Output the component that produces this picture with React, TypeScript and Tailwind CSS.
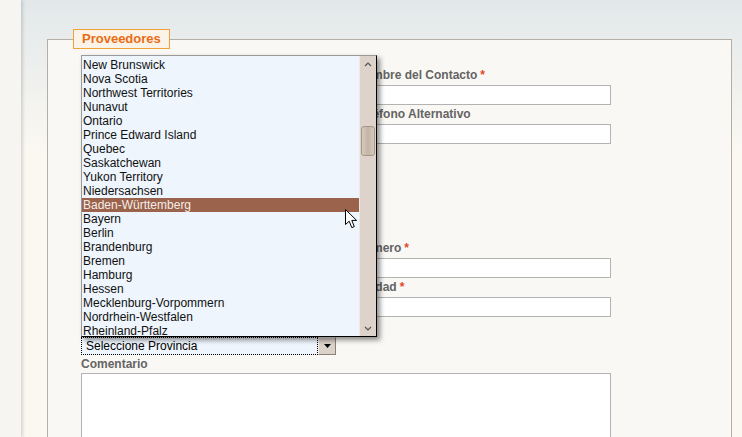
import React from 'react'

const provinces = [
  'New Brunswick',
  'Nova Scotia',
  'Northwest Territories',
  'Nunavut',
  'Ontario',
  'Prince Edward Island',
  'Quebec',
  'Saskatchewan',
  'Yukon Territory',
  'Niedersachsen',
  'Baden-Württemberg',
  'Bayern',
  'Berlin',
  'Brandenburg',
  'Bremen',
  'Hamburg',
  'Hessen',
  'Mecklenburg-Vorpommern',
  'Nordrhein-Westfalen',
  'Rheinland-Pfalz',
]

const Label = ({ text, required }: { text: string; required?: boolean }) => (
  <div className="h-[19px] leading-[19px] text-[12px] font-bold text-[#646464] whitespace-nowrap">
    {text}
    {required && <span className="ml-[3px] text-[#e5472b]">*</span>}
  </div>
)

const Field = ({ label, required }: { label: string; required?: boolean }) => (
  <div className="flex flex-col">
    <Label text={label} required={required} />
    <input type="text" className="h-[20px] w-full border border-[#b3b3b3] bg-white outline-none" />
  </div>
)

const Chevron = ({ down }: { down?: boolean }) => (
  <svg width="8" height="5" viewBox="0 0 8 5" className="text-[#555]">
    <polyline
      points={down ? '1,1 4,4 7,1' : '1,4 4,1 7,4'}
      fill="none"
      stroke="currentColor"
      strokeWidth="1.2"
    />
  </svg>
)

export default function App() {
  const selected = 'Baden-Württemberg'

  return (
    <div className="relative flex w-[742px] h-[437px] overflow-hidden font-['Liberation_Sans',Arial,sans-serif]">
      {/* left strip */}
      <div className="relative z-10 w-[21px] shrink-0 bg-[#f7f5f1] shadow-[2px_0_3px_rgba(0,0,0,0.14)]" />

      {/* main area */}
      <main className="flex-1 bg-linear-to-b from-[#e2e8ea] to-[#fbf8f2] to-35% pl-[26px] pr-[10px] pt-[29px]">
        <fieldset className="h-[440px] border border-[#b5aea5] bg-[#faf8f4]">
          <legend className="ml-[25px] border border-[#f0a236] bg-[#fcf3e8] px-[8px] text-[13px] leading-[18px] font-bold text-[#e86c14]">
            Proveedores
          </legend>

          <div className="grid grid-cols-[255px_255px] gap-x-[20px] pl-[33px] pt-[17px]">
            <Field label="Razón Social" required />
            <Field label="Nombre del Contacto" required />

            <Field label="CUIT" required />
            <Field label="Teléfono Alternativo" />

            <div className="flex flex-col">
              <Label text="Dirección" />
              <textarea className="h-[76px] w-full resize-none border border-[#b3b3b3] bg-white" />
            </div>
            <div />

            <Field label="Teléfono" required />
            <Field label="Número" required />

            <Field label="Email" />
            <Field label="Ciudad" required />

            <div className="flex flex-col">
              <div className="h-[20px] leading-[20px] text-[12px] font-bold text-[#646464]">
                Provincia<span className="ml-[3px] text-[#e5472b]">*</span>
              </div>
              {/* closed select */}
              <div className="flex h-[18px] w-[255px]">
                <div className="flex-1 border border-dotted border-black bg-[#eef5fc] pl-[4px] text-[12px] leading-[16px] text-black">
                  Seleccione Provincia
                </div>
                <div className="flex w-[18px] items-center justify-center border border-t-[#f3eee8] border-l-[#f3eee8] border-r-[#8c8178] border-b-[#8c8178] bg-[#dbd2c9]">
                  <svg width="7" height="4" viewBox="0 0 7 4">
                    <polygon points="0,0 7,0 3.5,4" fill="#000" />
                  </svg>
                </div>
              </div>
            </div>
            <div />

            <div className="col-span-2 flex flex-col">
              <div className="h-[18px] leading-[18px] text-[12px] font-bold text-[#646464]">Comentario</div>
              <textarea className="h-[90px] w-[530px] resize-none border border-[#b3b3b3] bg-white" />
            </div>
          </div>
        </fieldset>
      </main>

      {/* open dropdown list */}
      <div className="absolute left-[81px] top-[55px] z-20 flex h-[282px] w-[296px] border border-t-[#9a9a9a] border-l-[#9a9a9a] border-r-black border-b-black shadow-[3px_3px_5px_rgba(0,0,0,0.45)]">
        <ul className="flex-1 overflow-hidden bg-[#eef5fc] pt-[2px] text-[12px] leading-[14px]">
          {provinces.map((p) => (
            <li
              key={p}
              className={`h-[14px] whitespace-nowrap pl-[1px] ${
                p === selected ? 'bg-[#9b624c] text-[#f4ede7]' : 'text-[#111]'
              }`}
            >
              {p}
            </li>
          ))}
        </ul>
        <div className="flex w-[17px] flex-col border-l border-l-[#efe9e3] bg-[#ddd3ca]">
          <div className="flex h-[16px] items-center justify-center">
            <Chevron />
          </div>
          <div className="flex-1">
            <div className="mx-auto mt-[54px] h-[30px] w-[14px] rounded-[3px] border border-[#a5968a] bg-linear-to-r from-[#d6cabe] via-[#c3b3a5] to-[#d6cabe]" />
          </div>
          <div className="flex h-[16px] items-center justify-center">
            <Chevron down />
          </div>
        </div>
      </div>

      {/* mouse pointer */}
      <svg
        className="absolute left-[345px] top-[209px] z-30"
        width="13"
        height="20"
        viewBox="0 0 13 20"
      >
        <path
          d="M0.5 0.5 L0.5 15.5 L4.2 12.2 L6.8 18.6 L9.3 17.6 L6.8 11.4 L11.6 11.4 Z"
          fill="#fff"
          stroke="#000"
          strokeWidth="1"
          strokeLinejoin="round"
        />
      </svg>
    </div>
  )
}
